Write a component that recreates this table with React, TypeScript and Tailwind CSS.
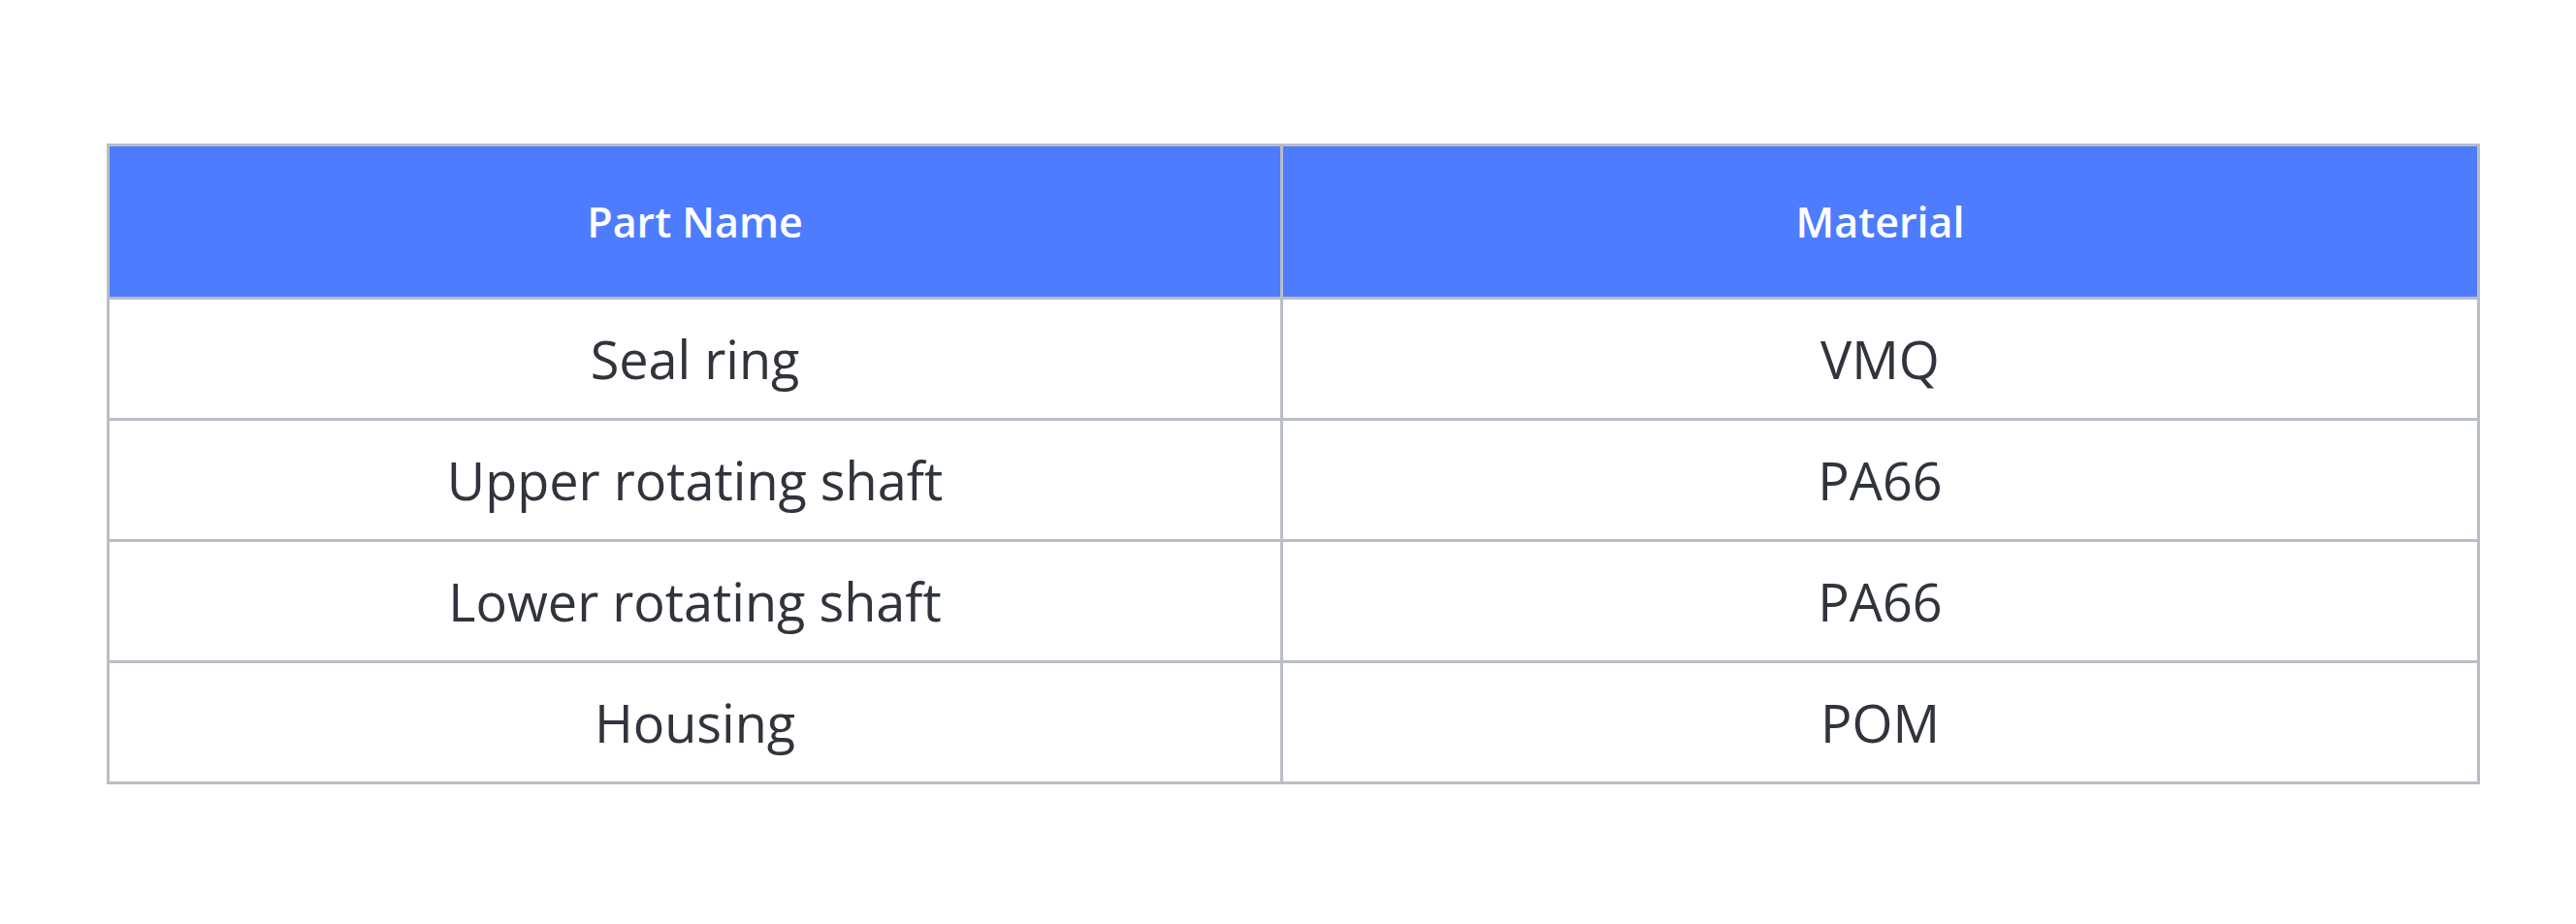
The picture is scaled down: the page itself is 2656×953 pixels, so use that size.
import React from "react";

const rows: [string, string][] = [
  ["Seal ring", "VMQ"],
  ["Upper rotating shaft", "PA66"],
  ["Lower rotating shaft", "PA66"],
  ["Housing", "POM"],
];

export default function App() {
  return (
    <div
      className="w-[2656px] h-[953px] bg-white pt-[148px] pl-[110px]"
      style={{ fontFamily: '"Open Sans", "Noto Sans", sans-serif' }}
    >
      <div className="w-[2447px] bg-[#b9bec6] p-[3px] grid grid-cols-[1207px_1231px] gap-[3px]">
        <div className="h-[155px] bg-[#4e7cff] flex items-center justify-center text-white text-[43px] font-semibold leading-none">
          Part Name
        </div>
        <div className="h-[155px] bg-[#4e7cff] flex items-center justify-center text-white text-[43px] font-semibold leading-none">
          Material
        </div>
        {rows.map(([a, b], i) => (
          <React.Fragment key={i}>
            <div className="h-[122px] bg-white flex items-center justify-center text-[#30343b] text-[54px] leading-none">
              {a}
            </div>
            <div className="h-[122px] bg-white flex items-center justify-center text-[#30343b] text-[54px] leading-none">
              {b}
            </div>
          </React.Fragment>
        ))}
      </div>
    </div>
  );
}
